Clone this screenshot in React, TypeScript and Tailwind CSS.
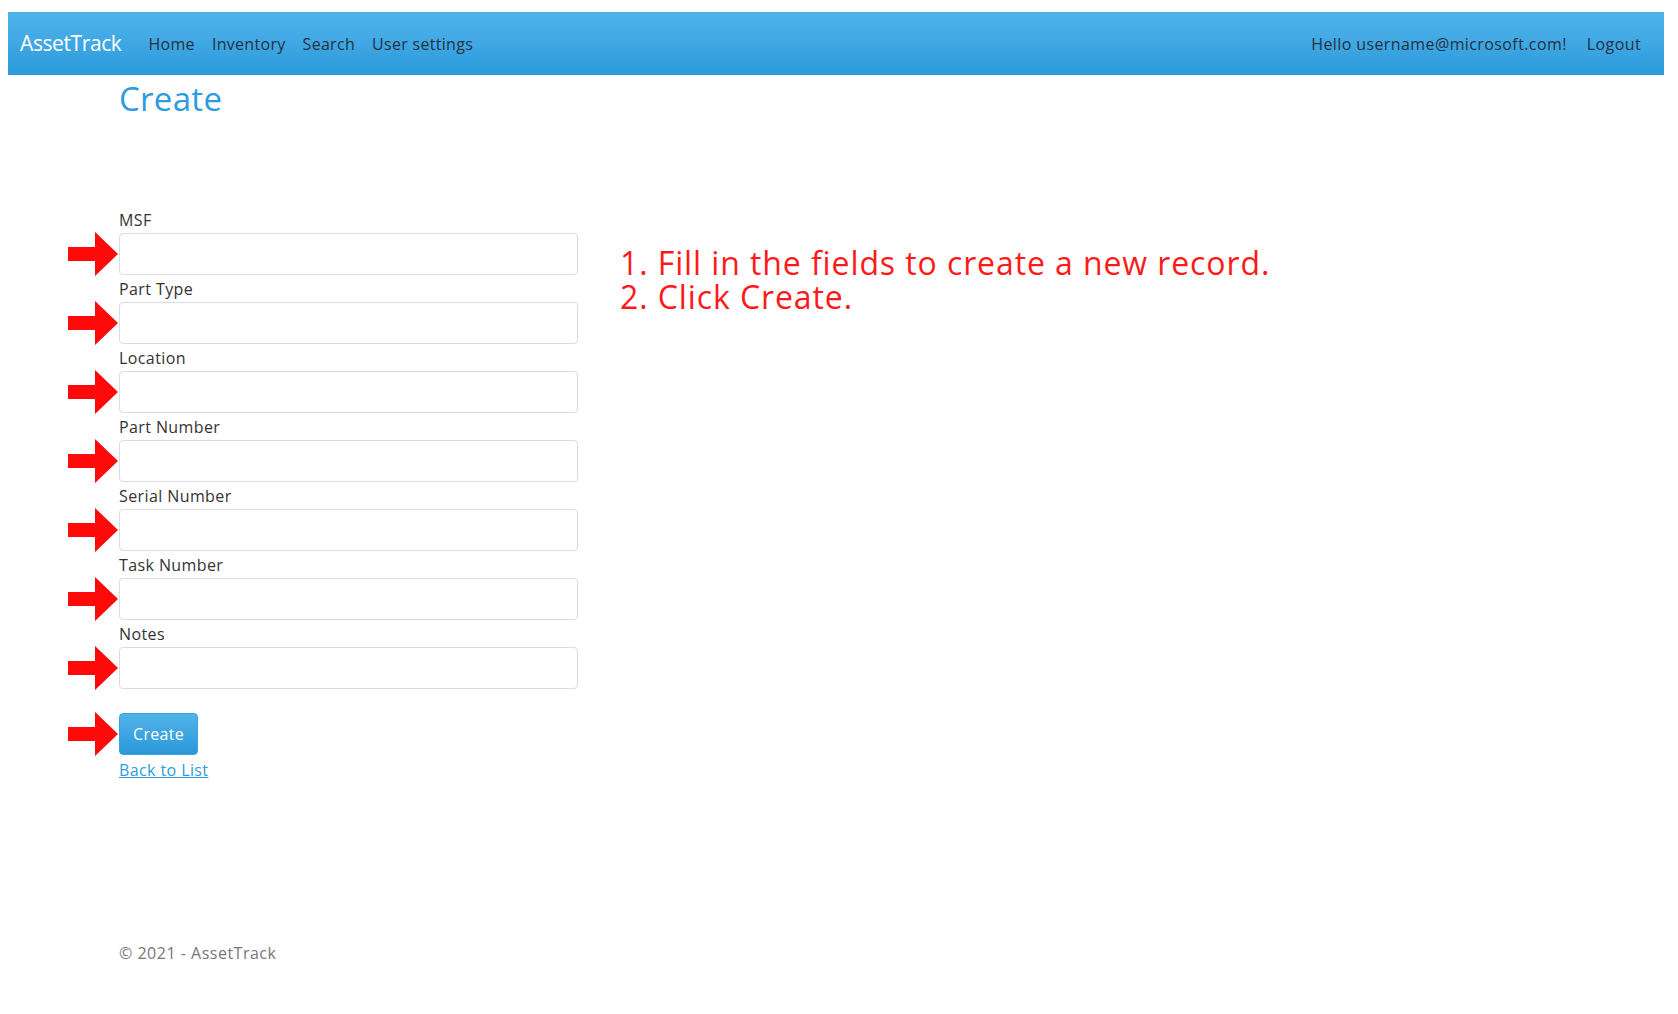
import React from "react";

const fields = ["MSF", "Part Type", "Location", "Part Number", "Serial Number", "Task Number", "Notes"];

function RedArrow() {
  return (
    <svg width="50" height="44" viewBox="0 0 50 44" className="shrink-0">
      <polygon points="0,15 27,15 27,0 50,22 27,44 27,29 0,29" fill="#ff0a0a" />
    </svg>
  );
}

export default function App() {
  return (
    <div className="min-h-[1014px] bg-white pt-[12px] text-[#333]" style={{ fontFamily: '"Open Sans", "Noto Sans", sans-serif' }}>
      <nav className="ml-[8px] flex h-[63px] w-[1656px] items-center bg-gradient-to-b from-[#50b4ec] to-[#2b9adb] pl-[12px] pr-[23px]">
        <a className="text-[21px] tracking-[-0.4px] text-white">AssetTrack</a>
        <div className="ml-[27px] flex items-center gap-[17px] text-[16px] tracking-[0.3px] text-[#26313d]">
          <a>Home</a>
          <a>Inventory</a>
          <a>Search</a>
          <a>User settings</a>
        </div>
        <div className="ml-auto flex items-center gap-[20px] text-[16px] tracking-[0.4px] text-[#26313d]">
          <span>Hello username@microsoft.com!</span>
          <a>Logout</a>
        </div>
      </nav>

      <main className="pl-[68px]">
        <h1 className="ml-[51px] mt-[2px] text-[33px] leading-[44px] tracking-[0.3px] text-[#2d9be0]">Create</h1>

        <div className="mt-[88px] flex">
          <form className="flex w-[510px] flex-col">
            {fields.map((f) => (
              <div key={f} className="flex flex-col pb-[3px]">
                <label className="ml-[51px] mb-[2px] text-[16px] leading-[22px] tracking-[0.4px] text-[#333]">{f}</label>
                <div className="flex h-[42px] items-center gap-[1px]">
                  <RedArrow />
                  <input className="h-[42px] w-[459px] rounded-[4px] border border-[#d8dde3] bg-white px-3 outline-none" />
                </div>
              </div>
            ))}

            <div className="mt-[21px] flex h-[42px] items-center gap-[1px]">
              <RedArrow />
              <button type="button" className="h-[42px] w-[79px] rounded-[4px] border border-[#3aa2df] bg-gradient-to-b from-[#4fb3ea] to-[#2b98d8] text-[16px] tracking-[0.3px] text-white">
                Create
              </button>
            </div>
            <a className="ml-[51px] mt-[3px] w-fit text-[16px] leading-[24px] tracking-[0.4px] text-[#2d9be0] underline">Back to List</a>
          </form>

          <div className="ml-[42px] mt-[37px] text-[32px] leading-[34px] tracking-[0.9px] text-[#ff1a1a]">
            <p>1. Fill in the fields to create a new record.</p>
            <p>2. Click Create.</p>
          </div>
        </div>

        <footer className="ml-[51px] mt-[159px] text-[16px] tracking-[0.5px] text-[#777]">© 2021 - AssetTrack</footer>
      </main>
    </div>
  );
}
